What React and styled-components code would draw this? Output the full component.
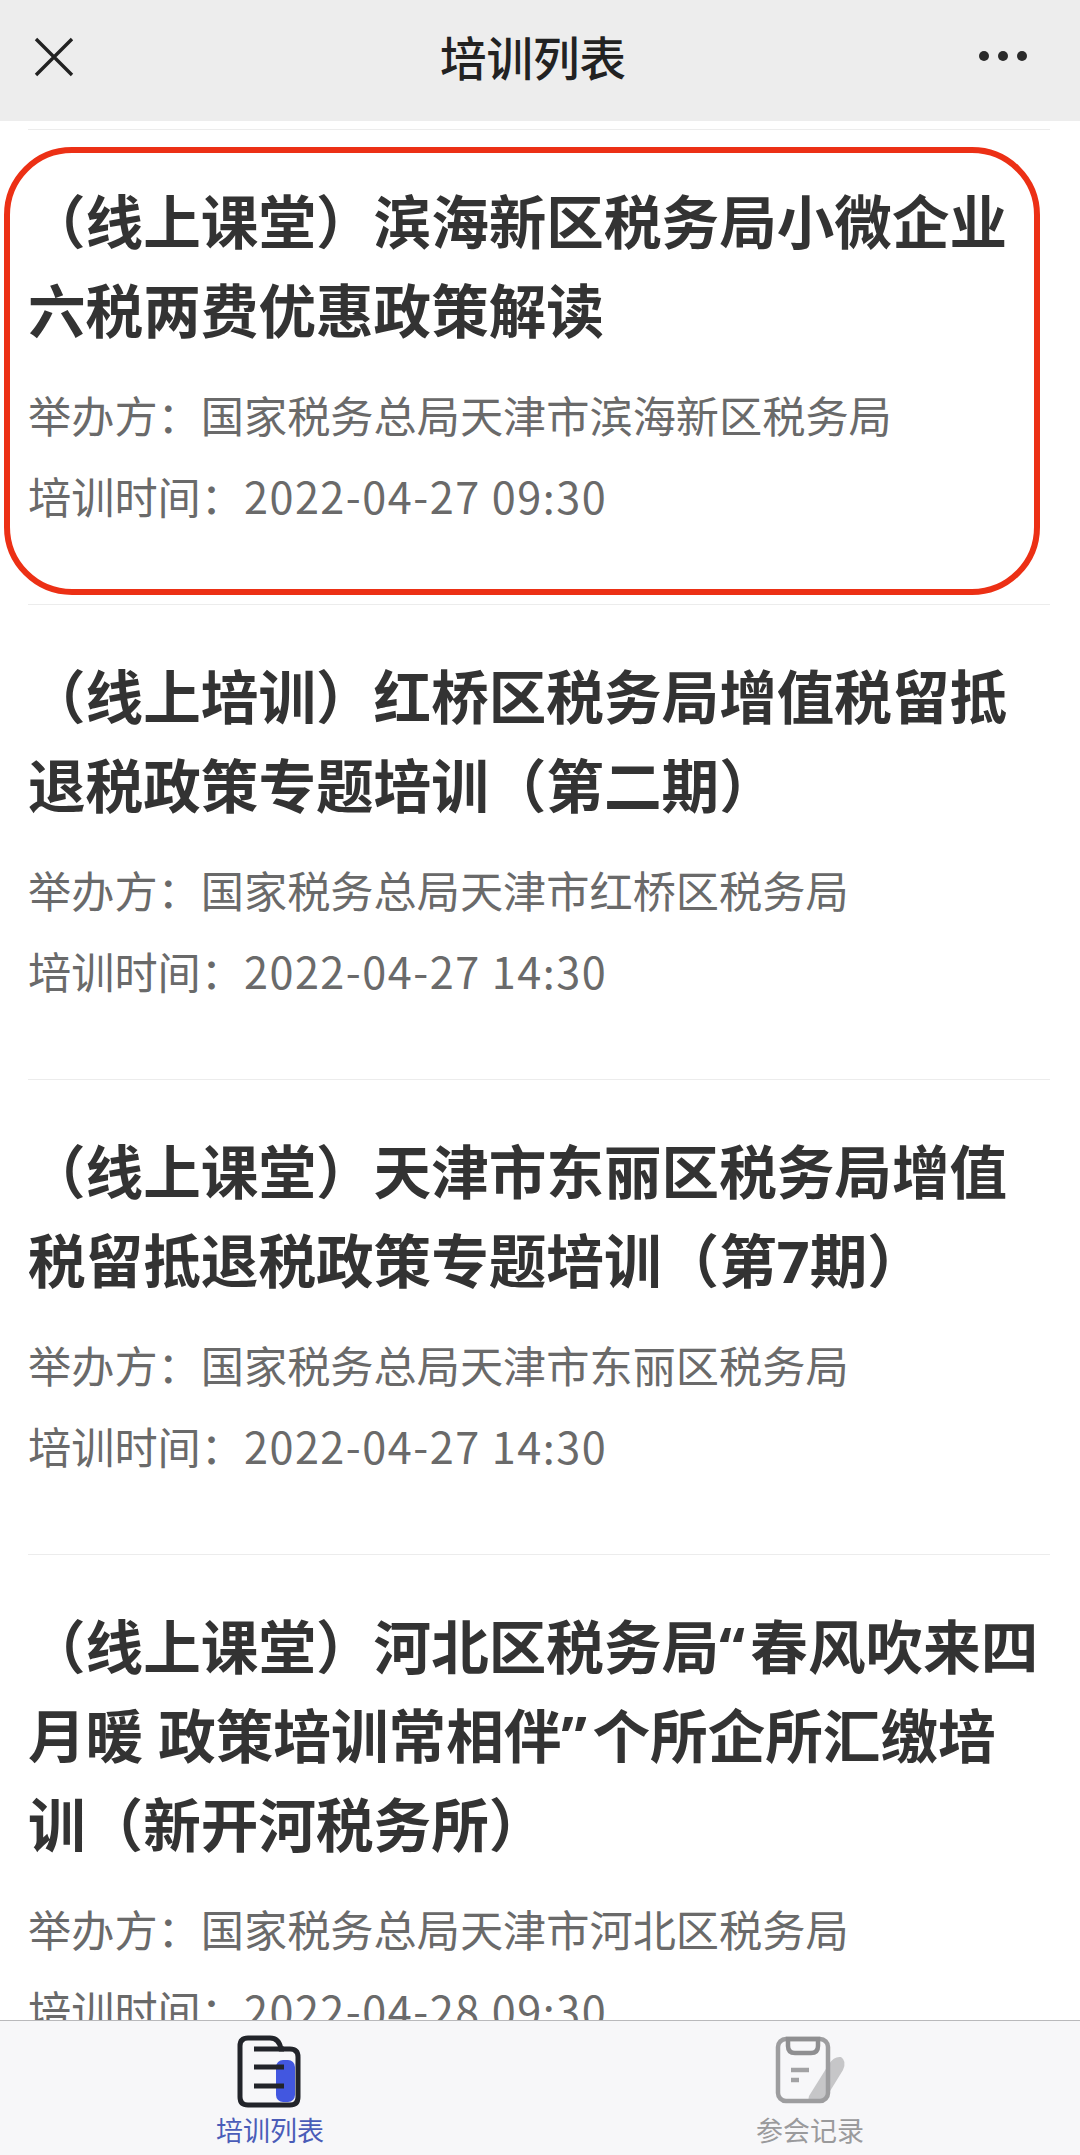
import React from "react";
import styled, { createGlobalStyle } from "styled-components";

const GlobalStyle = createGlobalStyle`
  html, body {
    margin: 0;
    padding: 0;
    background: #fff;
    font-family: "Noto Sans CJK SC", "Noto Sans", sans-serif;
  }
`;

const trainings = [
  {
    title: "（线上课堂）滨海新区税务局小微企业六税两费优惠政策解读",
    host: "国家税务总局天津市滨海新区税务局",
    time: "2022-04-27 09:30",
  },
  {
    title: "（线上培训）红桥区税务局增值税留抵退税政策专题培训（第二期）",
    host: "国家税务总局天津市红桥区税务局",
    time: "2022-04-27 14:30",
  },
  {
    title: "（线上课堂）天津市东丽区税务局增值税留抵退税政策专题培训（第7期）",
    host: "国家税务总局天津市东丽区税务局",
    time: "2022-04-27 14:30",
  },
  {
    title: "（线上课堂）河北区税务局“春风吹来四月暖 政策培训常相伴”个所企所汇缴培训（新开河税务所）",
    host: "国家税务总局天津市河北区税务局",
    time: "2022-04-28 09:30",
  },
];

function CloseIcon() {
  return (
    <svg width="40" height="40" viewBox="0 0 40 40" fill="none" stroke="#222" strokeWidth="3.4">
      <path d="M2 2 L38 38 M38 2 L2 38" />
    </svg>
  );
}

function MoreIcon() {
  return (
    <svg width="50" height="12" viewBox="0 0 50 12" fill="#2a2a2a">
      <circle cx="6" cy="6" r="5" />
      <circle cx="25" cy="6" r="5" />
      <circle cx="44" cy="6" r="5" />
    </svg>
  );
}

function ListIcon() {
  return (
    <svg width="120" height="76" viewBox="10 13 120 76">
      <rect x="76" y="40" width="19" height="42" rx="7" fill="#4257e0" />
      <path
        d="M40 26 Q40 18 48 18 H70 Q79 18 81 29 H90 Q98 29 98 37 V77 Q98 85 90 85 H48 Q40 85 40 77 Z"
        fill="none"
        stroke="#22242a"
        strokeWidth="5"
      />
      <path d="M54 29 H84 M54 47 H84 M54 66 H84" stroke="#22242a" strokeWidth="5" fill="none" />
    </svg>
  );
}

function RecordIcon() {
  return (
    <svg width="120" height="76" viewBox="1 13 120 76">
      <path
        d="M60 76 L80 44 Q85 36 92 37 Q98 41 94 50 L78 76 Q72 83 64 82 Q58 82 60 76 Z"
        fill="#c6c6c8"
      />
      <rect x="29" y="19" width="50" height="62" rx="8" fill="none" stroke="#9d9d9f" strokeWidth="4.5" />
      <path
        d="M39 19 H69 V26 Q69 33 62 33 H46 Q39 33 39 26 Z"
        fill="none"
        stroke="#8f8f91"
        strokeWidth="4.5"
      />
      <path d="M42 50 H60 M42 60 H50" stroke="#a2a2a4" strokeWidth="4.5" fill="none" />
    </svg>
  );
}

// the curly quotes sit a bit wider in the reference than in Noto Sans
const withQuotes = (text) =>
  text.split(/([“”])/).map((part, i) => (i % 2 ? <Quote key={i}>{part}</Quote> : part));

export default function App() {
  return (
    <Page>
      <GlobalStyle />
      <NavBar>
        <CloseIcon />
        <NavTitle>培训列表</NavTitle>
        <MoreIcon />
      </NavBar>
      <List>
        {trainings.map((item, index) => (
          <Item key={item.title}>
            {index === 0 && <Highlight />}
            <Title>{withQuotes(item.title)}</Title>
            <Meta>举办方：{item.host}</Meta>
            <Meta>培训时间：<Time>{item.time}</Time></Meta>
          </Item>
        ))}
      </List>
      <TabBar>
        <Tab $active>
          <ListIcon />
          <TabLabel $active>培训列表</TabLabel>
        </Tab>
        <Tab>
          <RecordIcon />
          <TabLabel>参会记录</TabLabel>
        </Tab>
      </TabBar>
    </Page>
  );
}

const Page = styled.div`
  display: flex;
  flex-direction: column;
  height: 100vh;
  overflow: hidden;
`;

const NavBar = styled.header`
  flex: none;
  height: 121px;
  display: flex;
  align-items: flex-start;
  justify-content: space-between;
  padding: 37px 52px 0 34px;
  box-sizing: border-box;
  background: #ededed;

  > svg:last-child {
    margin-top: 13px;
  }
`;

const NavTitle = styled.h1`
  margin: -11px 0 0 14px;
  font-size: 46.5px;
  line-height: 60px;
  font-weight: 500;
  color: #222;
`;

const List = styled.main`
  flex: 1;
  min-height: 0;
  overflow: hidden;
  padding: 8px 30px 0 28px;
`;

const Item = styled.article`
  position: relative;
  padding: 47px 0 68px;
  border-top: 1px solid #ececec;
`;

const Highlight = styled.div`
  position: absolute;
  left: -24px;
  right: 10px;
  top: 17px;
  bottom: 9px;
  border: 6px solid #ec3015;
  border-radius: 68px;
`;

const Title = styled.h2`
  margin: 0 0 19px;
  font-family: "Noto Sans", "Noto Sans CJK SC", sans-serif;
  font-size: 57.6px;
  line-height: 89px;
  font-weight: 700;
  color: #333;
`;

const Quote = styled.span`
  letter-spacing: 5.5px;
`;

const Meta = styled.p`
  margin: 0;
  font-size: 43.2px;
  line-height: 81px;
  font-weight: 400;
  color: #6a6a6a;
`;

const Time = styled.span`
  letter-spacing: 1.5px;
`;

const TabBar = styled.nav`
  flex: none;
  height: 135px;
  box-sizing: border-box;
  display: grid;
  grid-template-columns: 1fr 1fr;
  background: #f7f7f9;
  border-top: 1px solid #b9b9bb;
`;

const Tab = styled.div`
  display: flex;
  flex-direction: column;
  align-items: center;
  padding-top: 12px;
`;

const TabLabel = styled.span`
  margin-top: 5px;
  font-size: 27px;
  line-height: 32px;
  color: ${(p) => (p.$active ? "#4a5cb8" : "#9a9a9c")};
`;
